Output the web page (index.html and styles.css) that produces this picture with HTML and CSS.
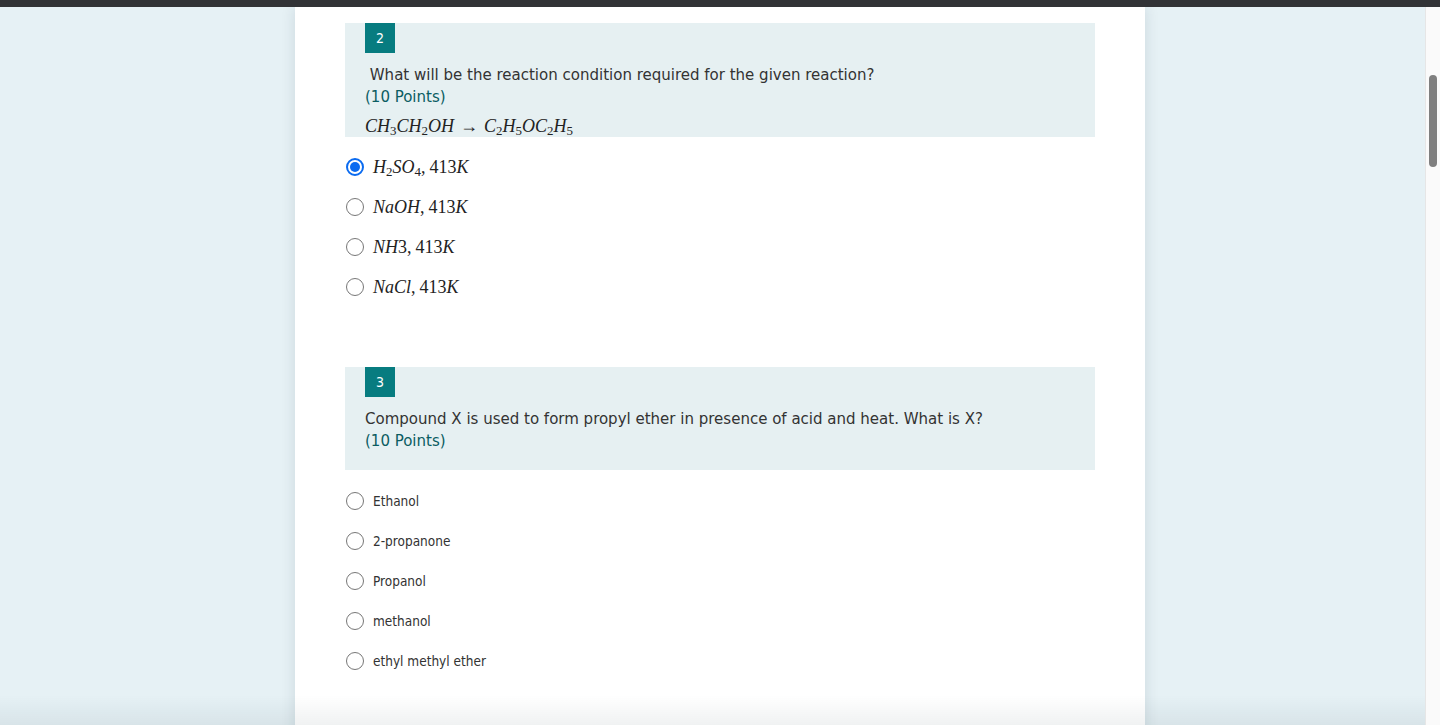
FILE: index.html
```html
<!DOCTYPE html>
<html>
<head>
<meta charset="utf-8">
<link rel="stylesheet" href="styles.css">
</head>
<body>
<div class="topbar"></div>
<div class="viewport">
  <div class="page">
    <div class="card">
      <section class="question">
        <div class="qhead">
          <div class="badge">2</div>
          <div class="qtext">&nbsp;What will be the reaction condition required for the given reaction?</div>
          <div class="points">(10 Points)</div>
          <div class="math eq"><i>CH</i><sub>3</sub><i>CH</i><sub>2</sub><i>OH</i><span class="arrow">→</span><i>C</i><sub>2</sub><i>H</i><sub>5</sub><i>OC</i><sub>2</sub><i>H</i><sub>5</sub></div>
        </div>
        <ul class="options">
          <li><span class="radio checked"></span><span class="math"><i>H</i><sub>2</sub><i>SO</i><sub>4</sub>,<span class="thin"></span>413<i>K</i></span></li>
          <li><span class="radio"></span><span class="math"><i>NaOH</i>,<span class="thin"></span>413<i>K</i></span></li>
          <li><span class="radio"></span><span class="math"><i>NH</i>3,<span class="thin"></span>413<i>K</i></span></li>
          <li><span class="radio"></span><span class="math"><i>NaCl</i>,<span class="thin"></span>413<i>K</i></span></li>
        </ul>
      </section>
      <section class="question q3">
        <div class="qhead tall">
          <div class="badge">3</div>
          <div class="qtext">Compound X is used to form propyl ether in presence of acid and heat. What is X?</div>
          <div class="points">(10 Points)</div>
        </div>
        <ul class="options text">
          <li><span class="radio"></span><span>Ethanol</span></li>
          <li><span class="radio"></span><span>2-propanone</span></li>
          <li><span class="radio"></span><span>Propanol</span></li>
          <li><span class="radio"></span><span>methanol</span></li>
          <li><span class="radio"></span><span>ethyl methyl ether</span></li>
        </ul>
      </section>
    </div>
  </div>
  <div class="scrollbar"><div class="thumb"></div></div>
</div>
<div class="vignette"></div>
</body>
</html>
```
FILE: styles.css
```css
* { box-sizing: border-box; }
html, body { margin: 0; padding: 0; height: 100%; overflow: hidden; }
body {
  font-family: Tahoma, "DejaVu Sans Condensed", Roboto, "Liberation Sans", sans-serif;
  color: #333333;
  background: #e6f1f5;
}
.topbar { height: 7px; background: #323336; }
.viewport { display: flex; height: 718px; }
.page {
  flex: 1;
  background: #e6f1f5;
  padding-left: 295px;
  overflow: hidden;
}
.card {
  width: 850px;
  min-height: 760px;
  background: #ffffff;
  padding: 16px 50px 0 50px;
  box-shadow: 0 0 14px rgba(0, 40, 60, 0.12);
}
.qhead {
  background: #e6f0f2;
  padding: 0 20px 0 20px;
  height: 114px;
}
.qhead.tall { height: 103px; }
.badge {
  width: 30px;
  height: 30px;
  background: #077c80;
  color: #ffffff;
  font-size: 14px;
  display: flex;
  align-items: center;
  justify-content: center;
}
.qtext {
  margin-top: 10px;
  font-size: 16.7px;
  line-height: 22px;
}
.points {
  font-size: 16.7px;
  line-height: 22px;
  color: #0b5d62;
}
.math {
  font-family: "Liberation Serif", "Times New Roman", serif;
  font-size: 18px;
  color: #222;
}
.math i { font-style: italic; }
.math sub { font-size: 72%; vertical-align: -3px; line-height: 0; }
.eq { margin-top: 9px; line-height: 20px; }
.arrow { margin: 0 6px; font-style: normal; }
.thin { display: inline-block; width: 4px; }
.options {
  list-style: none;
  margin: 0;
  padding: 10px 0 0 1px;
}
.options li {
  display: flex;
  align-items: center;
  height: 40px;
}
.options.text { padding-top: 11px; }
.options.text li { font-size: 13.5px; color: #333; }
.radio {
  width: 18px;
  height: 18px;
  border-radius: 50%;
  border: 1px solid #777777;
  background: #fff;
  margin-right: 9px;
  flex: none;
  position: relative;
}
.radio.checked {
  border: 2px solid #0b6bf0;
}
.radio.checked::after {
  content: "";
  position: absolute;
  left: 2px; top: 2px;
  width: 10px; height: 10px;
  border-radius: 50%;
  background: #0b6bf0;
}
.q3 { margin-top: 60px; }
.scrollbar {
  width: 15px;
  background: #fafafa;
  border-left: 1px solid #e6e6e6;
  padding: 68px 0 0 3px;
}
.thumb {
  width: 8px;
  height: 92px;
  border-radius: 4px;
  background: #7f7f7f;
}
.vignette {
  position: fixed;
  left: 0; right: 15px; bottom: 0;
  height: 30px;
  background: linear-gradient(to bottom, rgba(0,30,40,0), rgba(0,30,40,0.06));
  pointer-events: none;
}
```
